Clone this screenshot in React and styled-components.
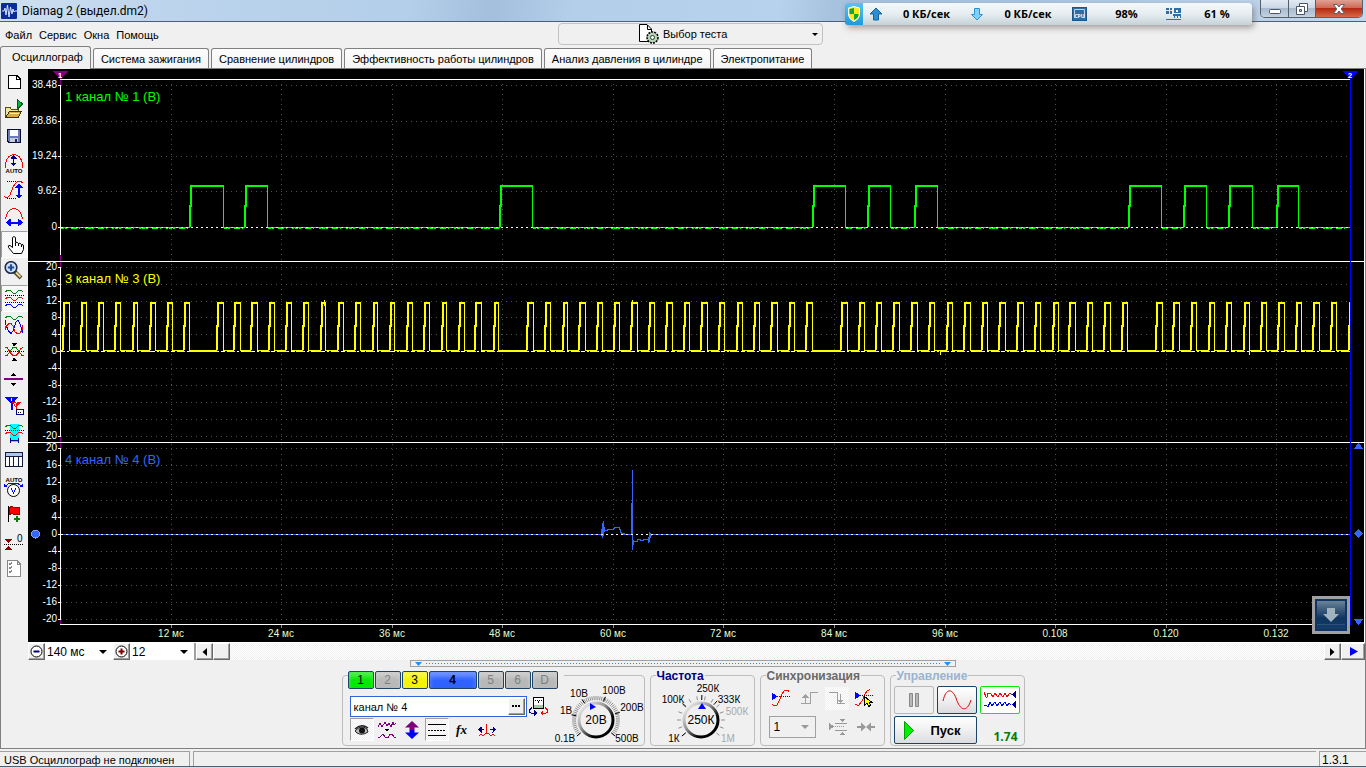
import { useState } from 'react';
import styled, { createGlobalStyle, css } from 'styled-components';

const GlobalStyle = createGlobalStyle`
  * { box-sizing: border-box; }
  body {
    margin: 0;
    background: #f0f0f0;
    font-family: "Liberation Sans", Arial, sans-serif;
    font-size: 11px;
    color: #000;
  }
  button, input, select { font: inherit; color: inherit; }
  svg { display: block; }
`;

const toolTips = [
  'Новый', 'Открыть', 'Сохранить', 'Автомасштаб', 'Масштаб по вертикали', 'Масштаб по горизонтали', 'Рука',
  'Лупа', 'Раздельно', 'Совместно', 'Сжать', 'Линия', 'Маркеры', 'Область', 'Таблица', 'Вольтметр',
  'Флаг', 'Ноль', 'Список',
];

const wave = (y, x = 1) => `M${x} ${y + 1}l3 -2h2l3 3h3l3 -3h2l2 2`;

const toolIcons = [
  <><path d="M4.5 3.5H13L16.5 7V16.5H4.5Z" fill="#fff" stroke="#000" /><path d="M12.5 3.5V7.5H16.5" fill="none" stroke="#000" /></>,
  <><path d="M1.5 18.5V8.5H6L7.5 10.5H14.5V13" fill="#ece79a" stroke="#5a5200" /><path d="M1.5 18.5L5.5 12.5H17.5L14 18.5Z" fill="#dca93c" stroke="#3b3200" /><path d="M6 14H15" stroke="#fff3b0" /><path d="M13.5 0.5V10L18.5 5Z" fill="#00b838" stroke="#045a1c" /></>,
  <><path d="M3.5 3.5H16.5V16.5H5L3.5 15Z" fill="#6b7bb8" stroke="#0a0f30" /><path d="M6 4H14V10H6Z" fill="#fff" /><path d="M6 12H14V16H6Z" fill="#c9cddb" /><path d="M11 13H13V16H11Z" fill="#1c2b66" /></>,
  <><path d="M1.5 15V11Q3 2 10 1.5Q17 2 18.5 11V15" fill="none" stroke="#f00" /><path d="M9.5 4V12" stroke="#00007c" /><path d="M6.5 5.5L9.5 1.5L12.5 5.5ZM6.5 9.5L9.5 13.5L12.5 9.5Z" fill="#00007c" /><text x="10" y="20" fontSize="6" fontWeight="700" textAnchor="middle">AUTO</text></>,
  <><path d="M3 1.5H12M3 18.5H12" stroke="#000" strokeDasharray="1 1" /><path d="M0 16.5Q3 19.5 6 15L9 7Q11 3 14 1.5H17L19.5 3.5" fill="none" stroke="#f00" /><path d="M15 6V16" stroke="#00f" strokeWidth="2" /><path d="M11 7.5L15 3L19 7.5ZM11 14.5L15 19L19 14.5Z" fill="#00f" /></>,
  <><path d="M1.5 12Q3 2 10 1.5Q17 2 18.5 12" fill="none" stroke="#f00" /><path d="M4 15.5H17" stroke="#00f" strokeWidth="2" /><path d="M6.5 11.5L1.5 15.5L6.5 19.5ZM14 11.5L19 15.5L14 19.5Z" fill="#00f" /></>,
  <path d="M8.5 13.5V3.5Q10 1.5 11.5 3.5V8.5Q13 7.5 14.5 9.5Q16 8.5 17.5 10.5Q19.5 10 19.5 12V15.5L17.5 19.5H9.5L4.5 13.5Q3.5 11 6 11.5L8.5 13.5M11.5 9V12M14.5 10V12M17.5 11V13" fill="#fff" stroke="#000" shapeRendering="auto" />,
  <g shapeRendering="auto"><path d="M10.5 10.5L17 17" stroke="#4d4526" strokeWidth="4" /><path d="M12 11.5L16.5 16" stroke="#e9d89a" strokeWidth="2" /><circle cx="7" cy="6.5" r="5.8" fill="#cfe4fb" stroke="#1d2c4a" strokeWidth="1.6" /><path d="M7 3.3V9.7M3.8 6.5H10.2" stroke="#1e4b9a" strokeWidth="2.2" /></g>,
  <><g fill="none"><path d={wave(3)} stroke="#008000" /><path d={wave(10)} stroke="#f00" /><path d={wave(17)} stroke="#00f" /></g><path d="M1 7.5H20M1 14.5H20" stroke="#000" strokeDasharray="1 1" /></>,
  <><g fill="none"><path d={wave(2)} stroke="#008000" /><path d="M1.5 5V9L4.5 16L7 18.5L9.5 15L12 7L14 5.5L16 9L19 18" stroke="#00f" /><path d="M1.5 15V12L5 8.5H7L9 11L11 17L14 19L16 18L18.5 14V10" stroke="#f00" /></g></>,
  <><path d="M7.5 1H13L10.3 4.5ZM7.5 19H13L10.3 15.5Z" /><path d="M1 5.5H3L7 11.5L9 13.5H12L14 11.5L17 6.5L19 5.5" fill="none" stroke="#f00" /><path d="M1 13.5H3L6 9.5L9 5.5H12L15 9.5L18 13.5H20" fill="none" stroke="#008000" /><path d="M1 9.5H20" stroke="#000" strokeDasharray="1 1" /></>,
  <><path d="M6.5 7H12.5L9.5 3.5ZM6.5 14H12.5L9.5 17.5Z" /><path d="M0 10H19" stroke="#800080" strokeWidth="2" /></>,
  <><path d="M1 1H14L9 8V14H7V8Z" fill="#00f" /><path d="M8 6H17L13 11V17H11.5V11Z" fill="#f00" /><path d="M7 2V5M10 8L12 7L11 10" stroke="#fff" fill="none" /><path d="M12.5 13.5H19.5V18.5H12.5Z" fill="#fff" stroke="#000080" /><path d="M14 16H18" stroke="#000" strokeDasharray="1 1" /></>,
  <><path d="M6 1H15V19H6Z" fill="#0ff" /><g fill="none"><path d={wave(3)} stroke="#008000" /><path d={wave(10)} stroke="#f00" /></g><path d="M1 7.5H20" stroke="#000" strokeDasharray="1 1" /><path d="M6 17.5H15M6.5 15V20M14.5 15V20" stroke="#000080" /></>,
  <><path d="M1.5 2.5H18.5V16.5H1.5Z" fill="#fff" stroke="#141a3c" /><path d="M2 3H18V6H2Z" fill="#a9c8ef" /><path d="M2 6.5H18M5.5 6V16M9.5 6V16M14.5 6V16" stroke="#141a3c" /></>,
  <><text x="10" y="5" fontSize="6" fontWeight="700" textAnchor="middle">AUTO</text><path d="M1 9.5L5 6.5H14L18 9.5" fill="none" stroke="#00f" /><path d="M0 6.5V10H4ZM19 6.5V10H15Z" fill="#00f" /><circle cx="9.5" cy="13.5" r="6" fill="#fff" stroke="#000" shapeRendering="auto" /><path d="M7 11.5L9.5 16L12 11.5" fill="none" stroke="#00f" /></>,
  <><path d="M4.5 2V18" stroke="#000" /><path d="M5 3.5L8 2.5L12 4L15.5 3.5V10.5L12 11L8 9.5L5 10.5Z" fill="#f00" stroke="#a00000" /><path d="M13 11.5V18M10 14.5H16" stroke="#008000" strokeWidth="2" /></>,
  <><text x="13" y="11" fontSize="10">0</text><path d="M0 13.5H20" stroke="#000" strokeDasharray="1 1" /><path d="M1 8H8L4.5 12ZM1 19H8L4.5 15Z" fill="#800000" /></>,
  <><path d="M3.5 2.5H13L16.5 6V18.5H3.5Z" fill="#fff" stroke="#888" /><path d="M13 2.5V6H16.5M5 5L6 7L8 4M5 9L6 11L8 8M5 13L6 15L8 12" fill="none" stroke="#888" /></>,
];

const tabs = [
  'Осциллограф', 'Система зажигания', 'Сравнение цилиндров', 'Эффективность работы цилиндров',
  'Анализ давления в цилиндре', 'Электропитание',
];

// one panel per channel: y of each tick, top to bottom
const panels = [
  { title: '1 канал № 1 (В)', color: '#00ff00', titleY: 101, zero: 227, labels: ['38.48', '28.86', '19.24', '9.62', '0'], ys: [85, 121, 156, 191, 227], end: 255 },
  { title: '3 канал № 3 (В)', color: '#ffff00', titleY: 283, zero: 351, labels: [20, 16, 12, 8, 4, 0, -4, -8, -12, -16, -20], ys: [267, 284, 301, 317, 334, 351, 368, 385, 402, 419, 436], end: 436 },
  { title: '4 канал № 4 (В)', color: '#3366ff', titleY: 464, zero: 534, labels: [20, 16, 12, 8, 4, 0, -4, -8, -12, -16, -20], ys: [448, 465, 482, 500, 517, 534, 551, 568, 585, 602, 619], end: 619 },
];

const timeMarks = [
  [171, '12 мс'], [281, '24 мс'], [392, '36 мс'], [502, '48 мс'], [613, '60 мс'], [723, '72 мс'],
  [834, '84 мс'], [945, '96 мс'], [1055, '0.108'], [1166, '0.120'], [1276, '0.132'],
];

// [rise, fall]
const camPulses = [
  [189, 223], [244, 267], [499, 532], [812, 845], [867, 890], [914, 937],
  [1128, 1161], [1183, 1206], [1228, 1252], [1276, 1298],
];

const crankPulses = [
  [62, 69], [80, 86], [97, 103], [114, 120], [132, 137], [149, 155], [166, 172], [183, 189],
  [216, 223], [233, 240], [250, 257], [268, 274], [285, 291], [302, 308], [320, 325], [337, 343], [354, 360],
  [372, 377], [389, 394], [406, 412], [423, 429], [441, 446], [458, 464], [474, 481], [493, 498],
  [526, 533], [544, 550], [562, 567], [578, 585], [596, 602], [613, 619], [630, 637], [648, 654], [665, 672],
  [683, 689], [700, 707], [718, 724], [736, 742], [753, 759], [770, 777], [788, 794], [805, 812],
  [840, 847], [858, 864], [875, 881], [892, 899], [910, 917], [928, 934], [946, 952], [963, 970], [981, 987],
  [998, 1005], [1016, 1023], [1034, 1040], [1052, 1058], [1068, 1075], [1086, 1092], [1103, 1110], [1121, 1127],
  [1155, 1162], [1172, 1179], [1190, 1196], [1208, 1214], [1225, 1231], [1243, 1249], [1260, 1266],
  [1277, 1284], [1295, 1301], [1312, 1319], [1330, 1336], [1348, 1350],
];

function Trace({ pulses, top, base, color }) {
  const mid = Math.round((top + base) / 2);
  const rises = pulses.map(([r, f]) => `M${r + 1} ${base}V${mid}H${r + 2}V${top + 1}H${f + 1}`).join('');
  const falls = pulses.map(([, f]) => `M${f}.5 ${top}V${base + 1}`).join('');
  const stops = [61, ...pulses.map((p) => p[1])];
  const line = stops.map((s, i) => `M${s} ${base}.5H${i < pulses.length ? pulses[i][0] + 1 : 1350}`).join('');
  return (
    <g fill="none" stroke={color}>
      <path d={rises} strokeWidth="2" />
      <path d={falls} />
      <path d={line} />
    </g>
  );
}

function Scope() {
  const gaps = crankPulses.slice(1).map((p, i) => [crankPulses[i][1], p[0]]).filter(([a, b]) => b - a > 20);
  const rests = [[61, 189], ...camPulses.map((p, i) => [p[1] + 1, i < camPulses.length - 1 ? camPulses[i + 1][0] : 1350])];
  return (
    <Plot viewBox="28 69 1336 573" role="img" aria-label="Осциллограмма">
      <g stroke="#505050" strokeDasharray="1 4">
        {timeMarks.map(([x]) => <path key={x} d={`M${x}.5 84V624`} />)}
        {panels.map((p) => p.ys.map((y) => y !== p.zero && <path key={y} d={`M61 ${y}.5H1350`} />))}
      </g>
      <path d="M60.5 78V624" stroke="#800080" />
      <path d="M60 79.5H1350M28 261.5H1364M28 442.5H1364M60 624.5H1350" stroke="#fff" />
      {panels.map((p) => (
        <g key={p.title}>
          <path d={`M60.5 ${p.ys[0]}V${p.end}`} stroke="#fff" />
          {p.ys.map((y, i) => (
            <g key={y}>
              <path d={`M58 ${y}.5H61`} stroke="#fff" />
              <AxisText x="57" y={y + 3} textAnchor="end">{p.labels[i]}</AxisText>
            </g>
          ))}
          <ChannelTitle x="65" y={p.titleY} fill={p.color}>{p.title}</ChannelTitle>
        </g>
      ))}
      {timeMarks.map(([x, label]) => (
        <g key={x}>
          <path d={`M${x}.5 625V628`} stroke="#888" />
          <TimeText x={x} y="637" textAnchor="middle">{label}</TimeText>
        </g>
      ))}

      <Trace pulses={camPulses} top={185} base={227} color="#00ff00" />
      <path d={rests.map(([a, b]) => `M${a} 228.5H${b}`).join('')} stroke="#00ff00" strokeDasharray="3 1 2 4 6 2 1 5 2 1" />
      <path d="M61 227.5H1350" stroke="#fff" strokeDasharray="2 3" />

      <Trace pulses={crankPulses} top={302} base={350} color="#ffff00" />
      <path d="M61 351.5H1350" stroke="#fff" strokeDasharray="4 2 2 2" />
      <path d={gaps.map(([a, b]) => `M${a} 351.5H${b + 1}`).join('')} stroke="#ffff00" />
      <path d={crankPulses.map(([r]) => `M${r - 6} 351.5H${r + 2}`).join('')} stroke="#ffff00" />
      <path d="M324.5 300V306M632.5 300V306M940.5 351V355M1249.5 351V355" stroke="#ffff00" />

      <g fill="none" stroke="#3366ff">
        <path d="M61 534.5H602M622 534.5H632M652 534.5H1350" />
        <path d="M601.5 529V536M602.5 523V538M603.5 521V536M604.5 527V532M604 530.5H607V529.5H613V528.5H614V527.5H619V529.5H620V532.5H621V533.5H625" />
        <path d="M632.5 470V550M631.5 503V534M633.5 540V545M634 541.5H637V539.5H640V540.5H643V539.5H648V541.5M648.5 537V543M649.5 532V542M650.5 533V538M651.5 534V536" />
      </g>
      <path d="M61 534.5H1350" stroke="#fff" strokeDasharray="2 3" />

      <path d="M53 71H68L60.5 79Z" fill="#800080" />
      <MarkerText x="60" y="78" textAnchor="middle">1</MarkerText>
      <path d="M1350.5 78V625" stroke="#00f" />
      <path d="M1343 71H1358L1350.5 79Z" fill="#00f" />
      <MarkerText x="1350" y="78" textAnchor="middle">2</MarkerText>
      <circle cx="35.5" cy="534" r="4" fill="#3366ff" stroke="#7fa0ff" />
      <path d="M1354 449H1363L1358.5 442.5ZM1354 619H1363L1358.5 625.5ZM1358.5 529L1363 533.5L1358.5 538L1354 533.5Z" fill="#3366ff" />
    </Plot>
  );
}

const polar = (cx, cy, r, deg) => {
  const a = (deg * Math.PI) / 180;
  return [Math.round((cx + r * Math.cos(a)) * 10) / 10, Math.round((cy + r * Math.sin(a)) * 10) / 10];
};

function Knob({ id, width, cx, cy, value, step, majors, labels, pointer }) {
  const ticks = [];
  for (let a = 140; a <= 400; a += step) ticks.push(a);
  const tick = (a, r1, r2) => `M${polar(cx, cy, r1, a).join(' ')}L${polar(cx, cy, r2, a).join(' ')}`;
  return (
    <KnobSvg width={width} height="70" viewBox={`0 0 ${width} 70`} role="img" aria-label={value}>
      <defs>
        <linearGradient id={id} x1="0" y1="0" x2="1" y2="1">
          <stop offset="0.1" stopColor="#e8e8e8" />
          <stop offset="0.4" stopColor="#999" />
          <stop offset="0.7" stopColor="#000" />
        </linearGradient>
      </defs>
      <path d={ticks.map((a) => tick(a, 20, 24)).join('')} stroke="#909090" />
      <path d={majors.map((a) => tick(a, 20, 25)).join('')} stroke="#000" />
      <circle cx={cx} cy={cy} r="17" fill="#f0f0f0" stroke={`url(#${id})`} strokeWidth="3" />
      <path d={pointer} fill="#00f" />
      <text x={cx} y={cy + 4} fontSize="12" textAnchor="middle">{value}</text>
      {labels.map(([x, y, text, off]) => (
        <text key={text} x={x} y={y} fontSize="10" textAnchor="middle" fill={off ? '#a8a8a8' : '#000'}>{text}</text>
      ))}
    </KnobSvg>
  );
}

export default function App() {
  const [tab, setTab] = useState(0);
  const [tool, setTool] = useState(6);
  const [name, setName] = useState('канал № 4');

  return (
    <Window>
      <GlobalStyle />
      <TitleBar>
        <svg width="16" height="16" viewBox="0 0 16 16" aria-hidden="true">
          <rect width="16" height="16" rx="1" fill="#0b2d9c" />
          <path d="M1 8H3L4 5L5 12L6.5 2L8 14L9.5 4L11 11L12 6L13 9L14 8H16" fill="none" stroke="#d5e6ff" />
        </svg>
        <Title>Diamag 2 (выдел.dm2)</Title>
        <WindowButtons>
          <WindowButton aria-label="Свернуть"><svg width="14" height="12"><rect x="1.5" y="6.5" width="11" height="4" rx="1" fill="#fff" stroke="#4c5566" /></svg></WindowButton>
          <WindowButton aria-label="Развернуть"><svg width="14" height="14"><path d="M4.5 1.5H12.5V9.5H4.5Z" fill="#fff" stroke="#4c5566" /><path d="M1.5 4.5H9.5V12.5H1.5Z" fill="#fff" stroke="#4c5566" /><path d="M4.5 7.5H6.5V9.5H4.5Z" fill="#b8c8da" stroke="#4c5566" /></svg></WindowButton>
          <WindowButton $close aria-label="Закрыть"><svg width="14" height="12"><path d="M1.5 1.5H5L7 4L9 1.5H12.5L9.2 6L12.5 10.5H9L7 8L5 10.5H1.5L4.8 6Z" fill="#fff" stroke="#5b5f70" /></svg></WindowButton>
        </WindowButtons>
        <Monitor>
          <Shield>
            <svg width="12" height="16" viewBox="0 0 12 16">
              <path d="M0.5 2L6 0.5L11.5 2V9Q11 13 6 15.5Q1 13 0.5 9Z" fill="#ffe91a" stroke="#fff" />
              <path d="M6 2V8H1.5V3ZM6 8H10.5V9.5Q10 12 6 14Z" fill="#16a62c" />
            </svg>
          </Shield>
          <Meter>
            <svg width="14" height="14"><path d="M7 1L13 7H9.5V13H4.5V7H1Z" fill="#2d8fd0" stroke="#17639d" /></svg>
            <span>0 КБ/сек</span>
          </Meter>
          <Meter>
            <svg width="14" height="14"><path d="M7 13L1.5 7.5H4.5V1.5H9.5V7.5H12.5Z" fill="#7fd1fb" stroke="#2b92d4" /></svg>
            <span>0 КБ/сек</span>
          </Meter>
          <Meter>
            <svg width="15" height="14"><rect x="0.5" y="0.5" width="14" height="13" fill="#2f6da3" stroke="#1f5688" /><path d="M2.5 11V2.5H12.5V11" fill="none" stroke="#b8d4ea" /><text x="7.5" y="11" fontSize="5" fontWeight="700" fill="#fff" textAnchor="middle">CPU</text></svg>
            <span>98%</span>
          </Meter>
          <Meter>
            <svg width="16" height="14" shapeRendering="crispEdges"><path d="M0 1H6V7H0ZM8 1H15V6H8ZM7 7H15V9H7Z" fill="#2f6da3" /><path d="M3 1V7M0 3.5H6M7.5 9V11M10.5 9V11M13.5 9V11" stroke="#dce9f2" /><path d="M8.5 9V11M11.5 9V11M14.5 9V11M0 12.5H15" stroke="#2f6da3" /><path d="M10 3H12V5H10Z" fill="#fff" /></svg>
            <span>61 %</span>
          </Meter>
        </Monitor>
      </TitleBar>

      <MenuRow>
        <Menu>
          {['Файл', 'Сервис', 'Окна', 'Помощь'].map((m) => <a key={m} href="#menu">{m}</a>)}
        </Menu>
        <TestButton>
          <svg width="20" height="20" viewBox="0 0 20 20">
            <path d="M0.5 0.5H8L12.5 5V17.5H0.5Z" fill="#fff" stroke="#000" />
            <path d="M8.5 1V5.5H12" fill="none" stroke="#000" />
            <circle cx="13.5" cy="13.5" r="5.5" fill="#b8d4b8" stroke="#000" strokeDasharray="2 1" strokeWidth="1.5" />
            <circle cx="13.5" cy="13.5" r="2" fill="#fff" stroke="#244a24" />
          </svg>
          <span>Выбор теста</span>
          <Caret />
        </TestButton>
      </MenuRow>

      <Tabs>
        {tabs.map((t, i) => <Tab key={t} $active={tab === i} onClick={() => setTab(i)}>{t}</Tab>)}
      </Tabs>

      <Workspace>
        <Upper>
          <ToolBar>
            {toolIcons.map((icon, i) => (
              <Tool key={toolTips[i]} aria-label={toolTips[i]} $pressed={tool === i || i === 8} onClick={() => setTool(i)}>
                <svg width="21" height="21" viewBox="0 0 21 21" shapeRendering="crispEdges">{icon}</svg>
              </Tool>
            ))}
          </ToolBar>
          <ScopeColumn>
            <ScopeArea>
              <Scope />
              <Gadget aria-label="Вниз"><svg width="16" height="15"><path d="M4 0H12V6H16L8 14L0 6H4Z" fill="#a3b2bf" /></svg></Gadget>
            </ScopeArea>
            <ZoomBar>
              <BevelButton aria-label="Уменьшить"><svg width="13" height="13"><circle cx="6.5" cy="6.5" r="5.5" fill="#fff" stroke="#000" /><path d="M3.5 6.5H9.5" stroke="#000080" strokeWidth="2" /></svg></BevelButton>
              <SelectWrap $width="68px">
                <select aria-label="Развёртка"><option>140 мс</option></select>
              </SelectWrap>
              <BevelButton aria-label="Увеличить"><svg width="13" height="13"><circle cx="6.5" cy="6.5" r="5.5" fill="#fff" stroke="#000" /><path d="M3.5 6.5H9.5M6.5 3.5V9.5" stroke="#800000" strokeWidth="2" /></svg></BevelButton>
              <SelectWrap $width="64px">
                <select aria-label="Делений"><option>12</option></select>
              </SelectWrap>
              <Divider />
              <BevelButton aria-label="Назад"><svg width="5" height="8"><path d="M5 0V8L0.5 4Z" /></svg></BevelButton>
              <BevelButton aria-label="Позиция" />
              <Track />
              <BevelButton aria-label="Вперёд"><svg width="5" height="8"><path d="M0 0V8L4.5 4Z" /></svg></BevelButton>
              <BevelButton $wide aria-label="Воспроизвести"><svg width="9" height="9"><path d="M1 0V9L9 4.5Z" fill="#00f" /></svg></BevelButton>
            </ZoomBar>
          </ScopeColumn>
        </Upper>

        <Splitter>
          <svg width="7" height="4"><path d="M0 0H7L3.5 4Z" fill="#1e90ff" /></svg>
          <Dots />
          <svg width="7" height="4"><path d="M0 0H7L3.5 4Z" fill="#1e90ff" /></svg>
        </Splitter>

        <Panels>
          <Group $width="303px">
            <ChannelTabs>
              <ChannelTab $bg="#00e800">1</ChannelTab>
              <ChannelTab disabled>2</ChannelTab>
              <ChannelTab $bg="#f4f400">3</ChannelTab>
              <ChannelTab $bg="#2f62ff" $active>4</ChannelTab>
              <ChannelTab disabled>5</ChannelTab>
              <ChannelTab disabled>6</ChannelTab>
              <ChannelTab disabled>D</ChannelTab>
            </ChannelTabs>
            <ChannelBody>
              <ChannelControls>
                <NameRow>
                  <NameField>
                    <input aria-label="Имя канала" value={name} onChange={(e) => setName(e.target.value)} />
                    <BevelButton aria-label="Выбрать имя">
                      <svg width="9" height="3"><path d="M0 0H2V2H0ZM3 0H5V2H3ZM6 0H8V2H6Z" /></svg>
                    </BevelButton>
                  </NameField>
                  <IconButton aria-label="Прибор">
                    <svg width="19" height="19" viewBox="0 0 19 19" shapeRendering="crispEdges">
                      <path d="M4.5 0.5H14.5V11.5H4.5Z" fill="#fff" stroke="#000" />
                      <path d="M5 8H14V11H5Z" fill="#a9c4a9" />
                      <path d="M6 3H13M8 3L10 6" stroke="#000" strokeDasharray="1 1" fill="none" />
                      <path d="M3 10.5L0.5 13V15L3 16.5H5" fill="none" stroke="#000080" />
                      <path d="M5 13L8 16L5 19Z" fill="#000080" />
                      <path d="M16 10.5L18.5 13V15L16 16.5H14" fill="none" stroke="#f00" />
                      <path d="M14 13L11 16L14 19Z" fill="#f00" />
                    </svg>
                  </IconButton>
                </NameRow>
                <IconRow>
                  <IconButton $pressed aria-label="Показать">
                    <svg width="15" height="12"><path d="M1 7Q7 0 13 5L14 8Q8 12 3 9Z" fill="#bbb" stroke="#222" /><circle cx="8" cy="6.5" r="3" fill="#111" /><path d="M1 5Q7 -1 14 4" stroke="#222" fill="none" strokeWidth="1.5" /></svg>
                  </IconButton>
                  <IconButton aria-label="Фильтр">
                    <svg width="18" height="18" shapeRendering="crispEdges"><path d="M0 6L2 2L4 6L7 1L9 5L11 2L13 6L15 1L16 4L18 2" fill="none" stroke="#800080" /><path d="M6.5 8H11.5L9 11Z" /><path d="M0 16L2 16L5 13L7 16L10 17L12 13L14 13L16 16L18 16" fill="none" stroke="#800080" /></svg>
                  </IconButton>
                  <IconButton aria-label="Сдвиг">
                    <svg width="16" height="18"><path d="M8 0L15 6.5H10.5V9H5.5V6.5H1Z" fill="#800080" /><path d="M8 18L15 11.5H10.5V9H5.5V11.5H1Z" fill="#00f" /></svg>
                  </IconButton>
                  <IconButton $pressed aria-label="Уровни">
                    <svg width="18" height="14" shapeRendering="crispEdges"><path d="M0 1.5H18M0 12.5H18" stroke="#000" /><path d="M0 7.5H18" stroke="#000" strokeDasharray="2 1" /></svg>
                  </IconButton>
                  <IconButton aria-label="Функция"><Fx>fx</Fx></IconButton>
                  <IconButton aria-label="Импульс">
                    <svg width="18" height="14" shapeRendering="crispEdges"><path d="M1 13L3 11L5 13L7 11L8.5 10V1M8.5 10L11 11L13 13L15 11L17 13" fill="none" stroke="#f00" /><path d="M1 6.5H6M12 6.5H17" stroke="#000080" /><path d="M0 6.5L3.5 3.5V9.5ZM18 6.5L14.5 3.5V9.5Z" fill="#000080" /></svg>
                  </IconButton>
                </IconRow>
              </ChannelControls>
              <KnobLift>
                <Knob
                  id="volt" width={94} cx={45} cy={45} step={5} value="20В"
                  majors={[140, 192, 236, 292, 342, 400]}
                  labels={[[14, 67, '0.1В'], [15, 39, '1В'], [28, 22, '10В'], [63, 19, '100В'], [81, 36, '200В'], [76, 67, '500В']]}
                  pointer="M39 28L45 32L39 35Z"
                />
              </KnobLift>
            </ChannelBody>
          </Group>

          <Group $width="105px">
            <GroupTitle $color="#000080">Частота</GroupTitle>
            <Knob
              id="freq" width={100} cx={50} cy={44} step={20} value="250К"
              majors={[140, 222, 272, 310]}
              labels={[[23, 66, '1К'], [22, 27, '100К'], [57, 16, '250К'], [78, 27, '333К'], [86, 39, '500К', true], [77, 66, '1М', true]]}
              pointer="M47 33H55L51 27Z"
            />
          </Group>

          <Group $width="125px">
            <GroupTitle $color="#696969">Синхронизация</GroupTitle>
            <SyncRow>
              <IconButton aria-label="Синхронизация">
                <svg width="18" height="18" shapeRendering="crispEdges"><path d="M0 15L2 17L5 16L7 12L10 5L12 2L14 1H16L17 3" fill="none" stroke="#f00" /><path d="M5 7.5H18" stroke="#00f" strokeDasharray="1 1" /><path d="M0 3.5V11.5L5 7.5Z" fill="#00f" /></svg>
              </IconButton>
              <IconButton aria-label="По фронту">
                <svg width="18" height="14" shapeRendering="crispEdges"><path d="M1 12.5H10.5V1.5H18M5.5 4V12" fill="none" stroke="#a0a0a0" /><path d="M2 6.5L5.5 2.5L9 6.5Z" fill="#a0a0a0" /></svg>
              </IconButton>
              <IconButton $pressed $flat aria-label="По спаду">
                <svg width="18" height="14" shapeRendering="crispEdges"><path d="M1 1.5H9.5V12.5H17M12.5 3V11" fill="none" stroke="#a0a0a0" /><path d="M9 8.5H16L12.5 12.5Z" fill="#a0a0a0" /></svg>
              </IconButton>
              <IconButton aria-label="Вручную">
                <svg width="19" height="18" shapeRendering="crispEdges"><path d="M0 15L2 16H4L7 12L10 5L12 2L15 0.5" fill="none" stroke="#f00" /><path d="M5 6.5H19" stroke="#00f" strokeDasharray="1 1" /><path d="M0 2.5V10.5L5 6.5Z" fill="#00f" /><path d="M9.5 7.5V16L12 14L13.5 17.5L15.5 16.5L14 13H16.5Z" fill="#ff0" stroke="#000" /></svg>
              </IconButton>
            </SyncRow>
            <SyncRow>
              <SyncSelect>
                <select disabled aria-label="Канал синхронизации"><option>1</option></select>
              </SyncSelect>
              <IconButton aria-label="Уровень">
                <svg width="18" height="16" shapeRendering="crispEdges"><path d="M6 4.5H18M6 11.5H18" stroke="#999" /><path d="M6 7.5H16" stroke="#999" strokeDasharray="1 1" /><path d="M0 4V11L5 7.5ZM10 0H17L13.5 3ZM10 16H17L13.5 13Z" fill="#999" /></svg>
              </IconButton>
              <IconButton aria-label="Центр">
                <svg width="18" height="10"><path d="M0 4H4V0.5L9 5L4 9.5V6H0ZM18 4H14V0.5L9 5L14 9.5V6H18Z" fill="#999" /></svg>
              </IconButton>
            </SyncRow>
          </Group>

          <Group $width="135px">
            <GroupTitle $color="#99b4d1">Управление</GroupTitle>
            <ControlGrid>
              <ControlButton disabled aria-label="Пауза"><svg width="12" height="16"><path d="M1.5 1.5H4.5V14.5H1.5ZM7.5 1.5H10.5V14.5H7.5Z" fill="#b8b8b8" stroke="#888" /></svg></ControlButton>
              <ControlButton aria-label="Один кадр"><svg width="30" height="20"><path d="M1 11C4 -2 10 -2 14 8C18 21 25 23 29 10" fill="none" stroke="#e00000" /></svg></ControlButton>
              <ControlButton $on aria-label="Непрерывно">
                <svg width="34" height="20" shapeRendering="crispEdges"><path d="M1 2L3 7L4 7L5 3L8 4L10 7L12 3L15 7L17 3L20 7L22 3L24 7L27 3L29 5" fill="none" stroke="#f00" /><path d="M1 15H3L5 17L7 12L9 16L12 12L14 16L17 12L19 16L22 12L24 16L26 13L28 15" fill="none" stroke="#00f" /><path d="M33 1V8L29 4.5ZM33 11V18L29 14.5Z" fill="#000080" /></svg>
              </ControlButton>
              <StartButton>
                <svg width="10" height="19"><path d="M0.5 0.5V18.5L9.5 9.5Z" fill="#00f000" stroke="#00a000" /></svg>
                <span>Пуск</span>
              </StartButton>
              <Rate>1.74</Rate>
            </ControlGrid>
          </Group>
        </Panels>
      </Workspace>

      <StatusBar>
        <StatusCell $first>USB Осциллограф не подключен</StatusCell>
        <StatusCell $grow />
        <StatusCell $last>1.3.1</StatusCell>
      </StatusBar>
    </Window>
  );
}

const dither = 'conic-gradient(#f0f0f0 25%, #fff 0 50%, #f0f0f0 0 75%, #fff 0) 0 0 / 2px 2px';

const Window = styled.div`
  display: flex;
  flex-direction: column;
  min-height: 100vh;
  border-bottom: 1px solid #cfdfee;
`;

const TitleBar = styled.header`
  position: relative;
  display: flex;
  align-items: center;
  gap: 5px;
  height: 22px;
  padding-left: 1px;
  background: linear-gradient(100deg, #cfe0f1 0, #bcd4ec 12%, #b4cfea 30%, #a3bfdc 36%, #b4cfea 42%, #b7d2ec 57%, #a6c2de 61%, #a9c5e1 75%, #c4d8ec 100%);
  border-bottom: 1px solid #4e5f75;
`;

const Title = styled.span`
  flex: 1;
  font: 12px/20px Roboto, "Noto Sans", sans-serif;
`;

const WindowButtons = styled.div`
  display: flex;
  align-self: flex-start;
  height: 18px;
  margin-right: 3px;
  border: 1px solid #55606e;
  border-top: 0;
  border-radius: 0 0 5px 5px;
  overflow: hidden;
`;

const WindowButton = styled.button`
  display: grid;
  place-items: center;
  width: ${(p) => (p.$close ? '47px' : '27px')};
  padding: 0;
  border: 0;
  background: ${(p) => (p.$close
    ? 'linear-gradient(#e0a293, #cf6a56 45%, #b42a12 50%, #d8694a)'
    : 'linear-gradient(#e2eaf3, #cbd7e5 45%, #a9bace 50%, #c3d3e4)')};
  & + & { border-left: 1px solid #55606e; }
`;

/* floating traffic and load widget over the title bar */
const Monitor = styled.div`
  position: absolute;
  top: 3px;
  right: 114px;
  z-index: 2;
  display: grid;
  grid-template-columns: 24px 101px 102px 94px 1fr;
  width: 407px;
  height: 22px;
  border-radius: 4px;
  background: linear-gradient(#f4f8fa, #e6eef1 50%, #c5d2d6);
  box-shadow: 2px 3px 6px rgba(80, 60, 60, 0.45);
`;

const Shield = styled.div`
  display: grid;
  place-items: center;
  width: 18px;
  border-radius: 3px 0 0 3px;
  background: linear-gradient(#5cc3ef, #1d9add);
`;

const Meter = styled.div`
  display: flex;
  align-items: center;
  font: 700 11px/20px "Open Sans", "Noto Sans", sans-serif;
  & > span {
    flex: 1;
    text-align: center;
  }
`;

const MenuRow = styled.div`
  display: grid;
  grid-template-columns: 558fr 265px 543fr;
  height: 24px;
  padding-top: 1px;
`;

const Menu = styled.nav`
  display: flex;
  align-items: center;
  gap: 7px;
  padding-left: 5px;
  a {
    color: #000;
    text-decoration: none;
  }
`;

const TestButton = styled.button`
  display: flex;
  align-items: center;
  gap: 4px;
  height: 22px;
  padding: 0 4px 0 80px;
  border: 1px solid #c3c3c3;
  border-radius: 4px;
  background: #f0f0f0;
  & > span:nth-child(2) {
    flex: 1;
    text-align: left;
  }
`;

const Caret = styled.span`
  border: 3px solid transparent;
  border-top-color: #000;
  border-bottom: 0;
`;

const Tabs = styled.nav`
  display: flex;
  align-items: flex-end;
  gap: 2px;
  height: 23px;
  border-bottom: 1px solid #808080;
`;

const Tab = styled.button`
  height: 20px;
  padding: 0 7px;
  border: 1px solid #808080;
  border-bottom: 0;
  border-radius: 3px 3px 0 0;
  background: linear-gradient(#fdfdfd, #f4f4f4);
  ${(p) => p.$active && css`
    height: 23px;
    margin-bottom: -1px;
    padding: 0 7px 2px 11px;
    background: #f0f0f0;
  `}
`;

const Workspace = styled.main`
  display: flex;
  flex-direction: column;
  flex: 1;
  border-left: 1px solid #808080;
  border-right: 1px solid #808080;
`;

const Upper = styled.div`
  display: flex;
  align-items: flex-start;
`;

const ToolBar = styled.div`
  display: flex;
  flex-direction: column;
  flex: 0 0 27px;
`;

const Tool = styled.button`
  display: grid;
  place-items: center;
  height: 27px;
  padding: 0;
  border: 1px solid transparent;
  background: none;
  ${(p) => p.$pressed && css`
    border-color: #a0a0a0 #fff #fff #a0a0a0;
    background: ${dither};
  `}
`;

const ScopeColumn = styled.div`
  flex: 1;
  min-width: 0;
`;

const ScopeArea = styled.div`
  position: relative;
  border-right: 1px solid #fff;
  background: #000;
`;

const Plot = styled.svg`
  width: 100%;
  height: auto;
  shape-rendering: crispEdges;
`;

const AxisText = styled.text`
  font-size: 10px;
  fill: #fff;
`;

const TimeText = styled(AxisText)`
  fill: #e4ffd0;
`;

const MarkerText = styled(AxisText)`
  font-size: 8px;
  font-weight: 700;
`;

const ChannelTitle = styled.text`
  font-size: 13px;
`;

const Gadget = styled.button`
  position: absolute;
  right: 14px;
  bottom: 8px;
  display: grid;
  place-items: center;
  width: 38px;
  height: 38px;
  padding: 0;
  border: 3px solid #a0a0a0;
  background: linear-gradient(rgba(130, 155, 175, 0.9), rgba(16, 58, 104, 0.9) 60%, rgba(24, 70, 118, 0.9));
  box-shadow: inset 0 0 0 2px #0e3566;
`;

const ZoomBar = styled.div`
  display: flex;
  height: 18px;
  border-top: 1px solid #fff;
`;

const BevelButton = styled.button`
  display: grid;
  place-items: center;
  flex: none;
  width: ${(p) => (p.$wide ? '24px' : '17px')};
  padding: 0;
  border: 1px solid;
  border-color: #fff #696969 #696969 #fff;
  background: #f0f0f0;
  box-shadow: inset -1px -1px 0 #a0a0a0;
`;

const SelectWrap = styled.div`
  position: relative;
  flex: none;
  width: ${(p) => p.$width};
  background: #fff;
  select {
    appearance: none;
    width: 100%;
    height: 100%;
    padding: 0 0 0 2px;
    border: 0;
    background: none;
    font-size: 12px;
  }
  &::after {
    content: '';
    position: absolute;
    top: 7px;
    right: 6px;
    border: 4px solid transparent;
    border-top-color: #000;
    border-bottom: 0;
    pointer-events: none;
  }
`;

const Divider = styled.span`
  width: 2px;
  background: #a0a0a0;
`;

const Track = styled.div`
  flex: 1;
  background: ${dither};
`;

const Splitter = styled.div`
  display: flex;
  align-items: center;
  align-self: center;
  width: 546px;
  height: 7px;
  padding: 0 4px;
  border: 1px solid #a0a0a0;
`;

const Dots = styled.span`
  flex: 1;
  height: 1px;
  margin: 0 4px;
  background: repeating-linear-gradient(90deg, #1e90ff 0 1px, transparent 1px 3px);
`;

const Panels = styled.div`
  display: flex;
  justify-content: center;
  gap: 5px;
  padding-top: 8px;
`;

const Group = styled.section`
  flex: none;
  width: ${(p) => p.$width};
  height: 71px;
  border: 1px solid #bdbdbd;
  border-radius: 4px;
`;

const GroupTitle = styled.h2`
  width: fit-content;
  height: 14px;
  margin: -7px 0 0 5px;
  padding: 0 1px;
  background: #f0f0f0;
  font-size: 12px;
  line-height: 14px;
  color: ${(p) => p.$color};
`;

const ChannelTabs = styled.div`
  display: flex;
  gap: 1px;
  width: fit-content;
  margin: -5px 0 0 5px;
  padding-right: 6px;
  background: #f0f0f0;
`;

const ChannelTab = styled.button`
  width: ${(p) => (p.$active ? '48px' : '26px')};
  height: 18px;
  padding: 0;
  border: 1px solid #1b4468;
  border-radius: 2px;
  background: ${(p) => p.$bg || '#b8b8b8'};
  box-shadow: inset 0 5px 4px rgba(255, 255, 255, 0.3);
  font-size: 12px;
  font-weight: ${(p) => (p.$active ? 700 : 400)};
  line-height: 14px;
  &:disabled { color: #808080; }
`;

const ChannelBody = styled.div`
  display: flex;
  justify-content: space-between;
`;

const ChannelControls = styled.div`
  padding: 6px 0 0 7px;
`;

const NameRow = styled.div`
  display: flex;
  align-items: center;
`;

const NameField = styled.div`
  display: flex;
  width: 177px;
  height: 21px;
  padding: 1px;
  border: 1px solid #2f62e0;
  background: #fff;
  input {
    flex: 1;
    min-width: 0;
    padding: 0 2px;
    border: 0;
    outline: 0;
    background: none;
  }
`;

const IconRow = styled.div`
  display: flex;
  gap: 1px;
`;

const IconButton = styled.button`
  display: grid;
  place-items: center;
  width: 24px;
  height: 23px;
  padding: 0;
  border: 1px solid transparent;
  background: none;
  ${(p) => p.$pressed && css`
    border-color: ${p.$flat ? 'transparent' : '#a0a0a0 #fff #fff #a0a0a0'};
    background: ${dither};
  `}
`;

const Fx = styled.span`
  font: italic 700 13px/16px "Liberation Serif", serif;
`;

const KnobSvg = styled.svg`
  flex: none;
  margin-top: -7px;
`;

const KnobLift = styled.div`
  margin-top: -7px;
`;

const SyncRow = styled.div`
  display: flex;
  align-items: center;
  gap: 4px;
  height: 30px;
  padding-left: 8px;
  & + & { height: 28px; }
`;

const SyncSelect = styled(SelectWrap)`
  width: 47px;
  height: 22px;
  margin-right: 6px;
  border: 1px solid #a0a0a0;
  background: #f0f0f0;
  select {
    padding-left: 4px;
    color: #000;
    opacity: 1;
  }
  &::after {
    top: 8px;
    border-top-color: #999;
  }
`;

const ControlGrid = styled.div`
  display: grid;
  grid-template-columns: 40px 40px 40px;
  grid-template-rows: 28px 28px;
  gap: 2px 3px;
  padding: 3px 3px 0;
`;

const ControlButton = styled.button`
  display: grid;
  place-items: center;
  padding: 0;
  border: 1px solid ${(p) => (p.$on ? '#00f000' : '#1b4468')};
  border-radius: 2px;
  background: ${(p) => (p.$on ? '#fff' : 'linear-gradient(#fff, #f0f0f0 50%, #dcdce0)')};
  &:disabled {
    border-color: #b8b8b8;
    background: #f0f0f0;
  }
`;

const StartButton = styled(ControlButton)`
  grid-column: span 2;
  display: flex;
  align-items: center;
  padding: 0 4px 0 9px;
  font-size: 13px;
  font-weight: 700;
  & > span {
    flex: 1;
    padding-left: 6px;
    text-align: center;
  }
`;

const Rate = styled.output`
  align-self: end;
  padding: 0 2px 0 0;
  text-align: right;
  font: 700 12px/14px "Open Sans", "Noto Sans", sans-serif;
  color: #008000;
`;

const StatusBar = styled.footer`
  display: flex;
  gap: 3px;
  height: 19px;
  padding-top: 2px;
  border-top: 1px solid #808080;
  border-bottom: 1px solid #4e5f75;
`;

const StatusCell = styled.div`
  flex: ${(p) => (p.$grow ? 1 : 'none')};
  width: ${(p) => (p.$first ? '190px' : p.$last ? '47px' : 'auto')};
  padding-left: ${(p) => (p.$first ? '4px' : '2px')};
  border: solid #a0a0a0;
  border-width: ${(p) => (p.$first ? '1px 1px 0 0' : '1px 0 0 1px')};
  font-size: ${(p) => (p.$last ? '12px' : '11px')};
  line-height: 16px;
`;
